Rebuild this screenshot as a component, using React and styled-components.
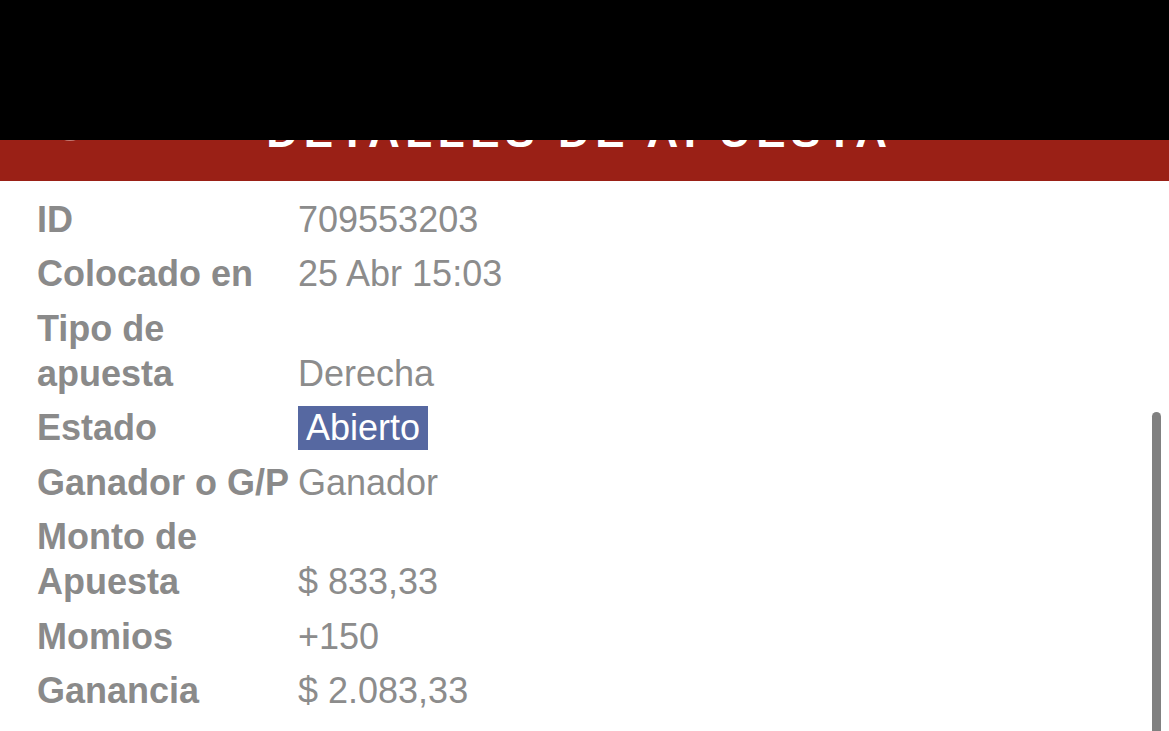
//Import Libraries
import React from 'react'
import styled, { createGlobalStyle } from 'styled-components'

//Global
const GlobalStyle = createGlobalStyle`
  html, body {
    margin: 0;
    padding: 0;
    background: #ffffff;
    overflow: hidden;
  }
  body {
    font-family: "Liberation Sans", Arial, sans-serif;
  }
`

//Styled
const Page = styled.div`
  position: relative;
  width: 100%;
  height: 731px;
  overflow: hidden;
  background: #ffffff;
`
const Header = styled.header`
  position: relative;
  height: 181px;
  box-sizing: border-box;
  background: #9a2016;
  display: grid;
  grid-template-columns: 1fr auto 1fr;
  align-items: end;
  padding-bottom: 27px;
`
const StatusBar = styled.div`
  position: absolute;
  top: 0;
  left: 0;
  right: 0;
  height: 140px;
  background: #000000;
  z-index: 2;
`
const BackButton = styled.div`
  justify-self: start;
  margin-left: 52px;
  margin-bottom: 12px;
  width: 36px;
  height: 36px;
  display: flex;
  align-items: center;
  justify-content: center;
`
const Title = styled.h1`
  margin: 0 10px 0 0;
  font-size: 44px;
  line-height: 44px;
  font-weight: 700;
  letter-spacing: 5.6px;
  color: #ffffff;
  white-space: nowrap;
  text-transform: uppercase;
`
const Details = styled.div`
  padding: 11px 37px 0;
`
const Row = styled.div`
  display: grid;
  grid-template-columns: 261px 1fr;
  align-items: end;
  padding: 4.75px 0;
  font-size: 36px;
  line-height: 45px;
`
const Label = styled.div`
  font-weight: 700;
  color: #8a8a8a;
`
const Value = styled.div`
  font-weight: 400;
  color: #8c8c8c;
`
const Badge = styled.span`
  display: inline-block;
  background: #5668a1;
  color: #ffffff;
  padding: 0 8px;
  line-height: 44px;
`
const ScrollIndicator = styled.div`
  position: absolute;
  right: 8px;
  top: 412px;
  bottom: 0;
  width: 9px;
  border-radius: 5px 5px 0 0;
  background: #808080;
`

const rows = [
  { label: 'ID', value: '709553203' },
  { label: 'Colocado en', value: '25 Abr 15:03' },
  { label: 'Tipo de apuesta', value: 'Derecha' },
  { label: 'Estado', value: 'Abierto', badge: true },
  { label: 'Ganador o G/P', value: 'Ganador' },
  { label: 'Monto de Apuesta', value: '$ 833,33' },
  { label: 'Momios', value: '+150' },
  { label: 'Ganancia', value: '$ 2.083,33' },
]

function App() {
  return (
    <>
      <GlobalStyle />
      <Page>
        <Header>
          <StatusBar />
          <BackButton>
            <svg width="36" height="36" viewBox="0 0 36 36" fill="none">
              <circle cx="18" cy="18" r="16" stroke="#ffffff" strokeOpacity="0.4" strokeWidth="2" />
              <path d="M21 10 L13 18 L21 26" stroke="#ffffff" strokeWidth="3" strokeLinecap="round" strokeLinejoin="round" />
            </svg>
          </BackButton>
          <Title>Detalles de apuesta</Title>
          <div />
        </Header>
        <Details>
          {rows.map((r) => (
            <Row key={r.label}>
              <Label>{r.label}</Label>
              <Value>{r.badge ? <Badge>{r.value}</Badge> : r.value}</Value>
            </Row>
          ))}
        </Details>
        <ScrollIndicator />
      </Page>
    </>
  )
}

export default App
